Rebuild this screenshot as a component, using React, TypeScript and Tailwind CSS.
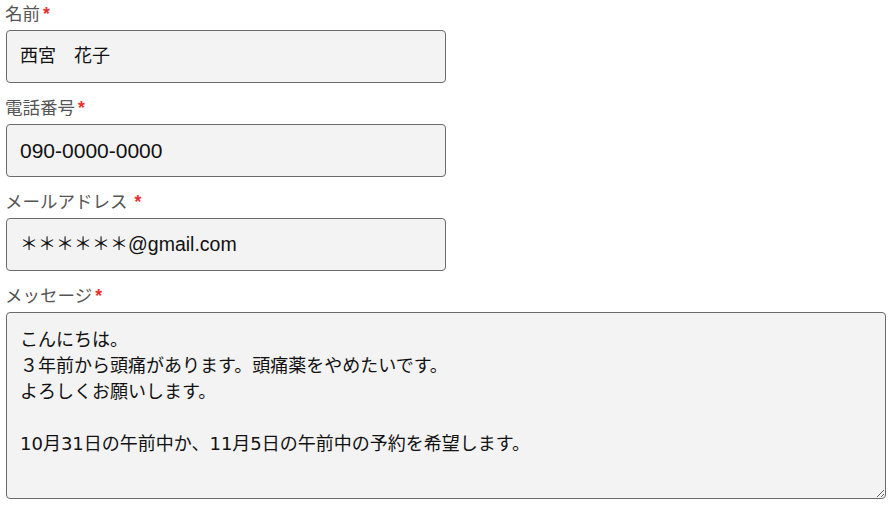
const font = {
  fontFamily: '"Liberation Sans", "Noto Sans CJK JP", sans-serif',
};

function Label({ text, spaced }: { text: string; spaced?: boolean }) {
  return (
    <label className="block pl-[5px] mb-[2px] text-[17.5px] leading-[28px] text-[#555]">
      {text}
      <span className={`font-bold text-[#e8302f] ${spaced ? "ml-[2px]" : "ml-[3px]"}`}>*</span>
    </label>
  );
}

function Field({
  label,
  spaced,
  children,
}: {
  label: string;
  spaced?: boolean;
  children: React.ReactNode;
}) {
  return (
    <div>
      <Label text={label} spaced={spaced} />
      <div className="ml-[6px] mb-[11px] flex h-[53px] w-[440px] items-center rounded-[4px] border border-[#6b6b6b] bg-[#f3f3f3] px-[13px] text-[18px] text-[#111]">
        {children}
      </div>
    </div>
  );
}

const message =
  "こんにちは。\n３年前から頭痛があります。頭痛薬をやめたいです。\nよろしくお願いします。\n\n10月31日の午前中か、11月5日の午前中の予約を希望します。";

export default function App() {
  return (
    <div className="min-h-[505px] w-[890px] bg-white" style={font}>
      <Field label="名前">
        <span>西宮　花子</span>
      </Field>
      <Field label="電話番号">
        <span className="text-[21px]">090-0000-0000</span>
      </Field>
      <Field label="メールアドレス " spaced>
        <span>＊＊＊＊＊＊</span>
        <span className="text-[19.5px]">@gmail.com</span>
      </Field>
      <div>
        <Label text="メッセージ" />
        <textarea
          readOnly
          defaultValue={message}
          style={{ fontFamily: '"DejaVu Sans", "Noto Sans CJK JP", sans-serif' }}
          className="ml-[6px] block h-[187px] w-[880px] rounded-[4px] border border-[#6b6b6b] bg-[#f3f3f3] px-[13px] pt-[14px] text-[18px] leading-[26px] text-[#111] outline-none"
        />
      </div>
    </div>
  );
}
